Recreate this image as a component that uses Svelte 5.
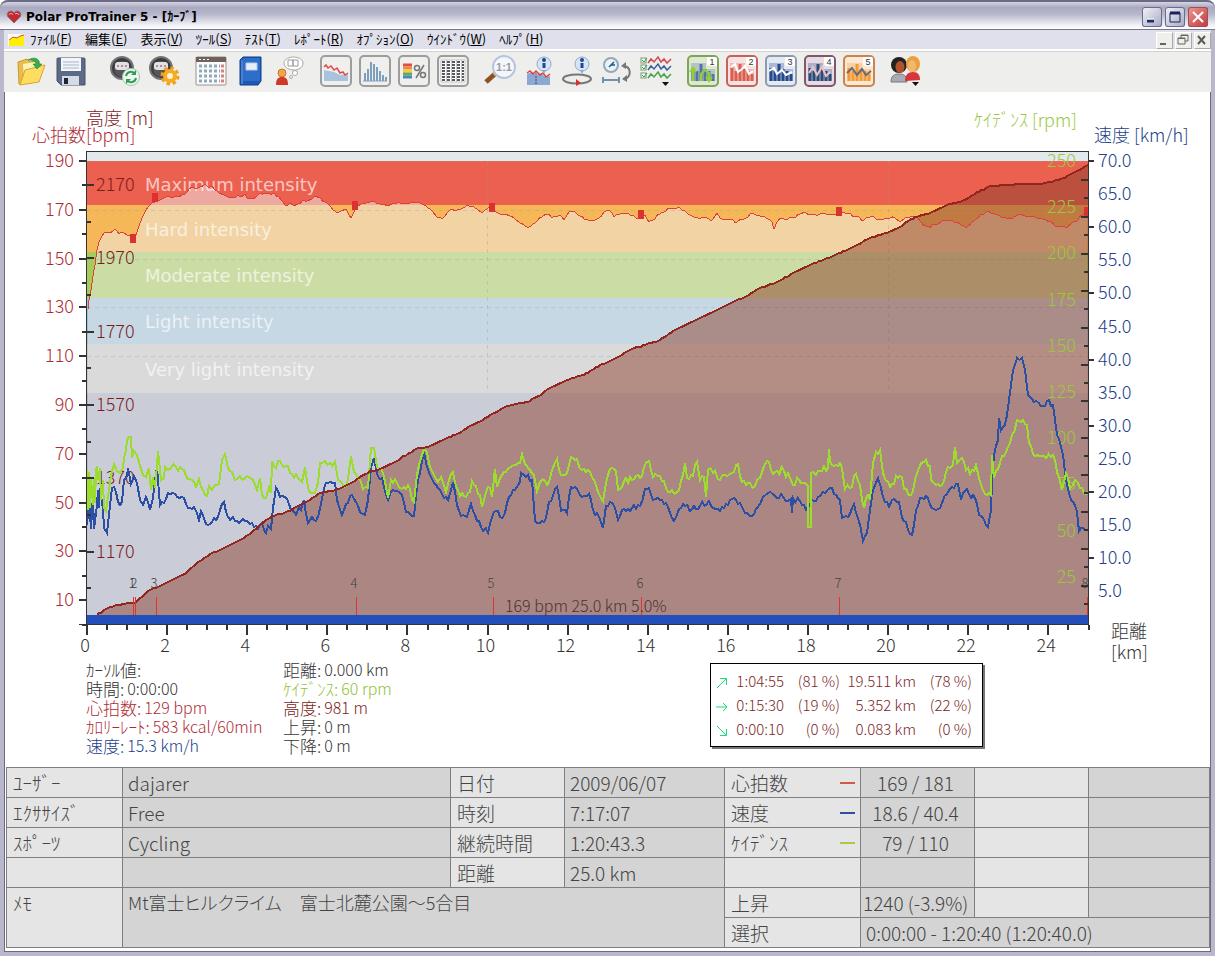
<script>
  const menus = [
    ['ﾌｧｲﾙ', 'F'], ['編集', 'E'], ['表示', 'V'], ['ﾂｰﾙ', 'S'], ['ﾃｽﾄ', 'T'],
    ['ﾚﾎﾟｰﾄ', 'R'], ['ｵﾌﾟｼｮﾝ', 'O'], ['ｳｲﾝﾄﾞｳ', 'W'], ['ﾍﾙﾌﾟ', 'H']
  ];

  const groups = [
    ['open', 'save'],
    ['connect', 'settings'],
    ['calendar', 'diary', 'coach'],
    ['curve', 'bars', 'zones', 'list'],
    ['zoom', 'info', 'lap', 'axis', 'select'],
    ['p1', 'p2', 'p3', 'p4', 'p5'],
    ['people']
  ];

  const titles = {
    open: 'Open', save: 'Save', connect: 'Connect', settings: 'Settings', calendar: 'Calendar',
    diary: 'Diary', coach: 'Coach', curve: 'Curve', bars: 'Distribution', zones: 'Zones', list: 'List',
    zoom: 'Zoom', info: 'Info', lap: 'Lap', axis: 'Axis', select: 'Select curves',
    p1: 'View 1', p2: 'View 2', p3: 'View 3', p4: 'View 4', p5: 'View 5', people: 'Users'
  };

  const presets = {
    p1: { frame: '#7fa657', fill: '#dde8d0', bar: '#5673a0', line: '#8fd42c', d: 'M6 26V14M3 17l3-4 3 4M14 26V19l4-4 4 3v7M19 22l3 4 3-4' },
    p2: { frame: '#c8605c', fill: '#f6e2e0', bar: '#d9604f', line: '#ffffff', d: 'M5 12l4-3 3 8 4-3 3-3 4 8 4-3' },
    p3: { frame: '#8d9bb0', fill: '#e4eaf2', bar: '#27488f', line: '#ffffff', d: 'M4 16l5-3 3 6 5-4 4 5 6-3' },
    p4: { frame: '#84566a', fill: '#e6dbe2', bar: '#2b4a77', line: '#e9c3cc', d: 'M5 18l4-6 4 8 5-8 4 9 4-4' },
    p5: { frame: '#cc834c', fill: '#fbe9d4', bar: '#f29a35', line: '#6b6a78', d: 'M4 18l5-5 5 7 5-6 4 6 5-4' }
  };

  // Flat coordinate lists on the plot's own scale: x, y, x, y ...
  const hr = [88,309,89,300,91,290,93,276,95,265,97,250,99,242,102,236,104,233,107,232,110,233,113,231,115,229,117,231,119,234,121,232,124,233,127,235,130,236,132,240,135,238,137,232,139,226,142,218,145,212,148,207,151,204,155,202,158,200,162,199,166,197,172,197,178,196,183,194,187,192,189,189,192,187,196,188,200,187,205,184,208,187,212,186,215,190,219,193,224,195,230,197,235,198,238,195,240,197,245,194,247,198,252,198,257,196,260,193,265,193,270,194,274,193,279,197,283,202,286,206,290,203,293,205,298,204,303,200,307,201,312,199,315,196,320,198,325,202,329,205,333,210,337,213,341,211,346,209,349,215,351,218,354,212,357,206,362,203,368,202,372,201,376,203,384,204,387,206,392,204,400,203,410,203,413,202,420,203,424,205,428,208,432,211,437,217,443,218,447,213,450,210,457,210,463,208,467,205,473,206,477,209,482,213,485,210,489,207,492,209,496,212,500,214,505,214,510,216,515,219,520,223,525,226,531,226,537,221,542,217,547,214,552,218,556,216,560,215,564,220,569,212,574,211,580,216,586,219,593,220,599,218,604,212,608,210,612,213,614,217,620,214,626,213,634,216,638,219,641,218,645,215,649,222,655,219,658,214,664,212,670,208,680,208,686,212,694,217,700,219,705,217,711,221,717,213,720,218,726,220,730,219,737,222,742,219,748,217,752,213,758,215,764,216,768,219,772,222,774,229,777,222,782,218,786,219,790,217,795,218,800,214,805,212,810,214,816,215,822,213,830,214,836,215,843,212,850,213,855,217,858,216,862,221,866,218,872,216,878,219,884,219,890,218,895,218,900,222,905,218,912,216,918,218,921,222,926,226,930,228,933,224,937,225,942,221,950,220,956,222,961,225,967,227,972,222,976,219,980,215,986,212,993,213,1000,216,1007,219,1012,219,1018,215,1027,216,1037,218,1045,219,1050,221,1055,226,1061,226,1067,228,1072,223,1078,220,1081,215,1087,212];
  const altitude = [97,615,103,611,108,608,118,605,127,603,134,603,138,600,150,590,160,586,180,576,187,572,198,562,210,554,220,550,240,540,250,534,264,522,272,516,290,511,300,505,310,500,320,493,335,490,355,481,370,471,378,470,395,462,416,449,428,447,445,439,457,434,468,427,483,420,490,415,505,407,515,404,530,401,543,393,550,388,565,381,570,379,588,373,600,365,612,360,630,350,645,345,658,341,675,330,700,318,715,311,735,301,745,297,760,288,777,282,793,273,810,265,825,259,835,255,855,246,870,238,887,233,900,227,915,217,930,213,945,206,960,202,975,194,990,186,1005,185,1020,184,1040,184,1052,182,1065,178,1075,172,1088,165];
  const cadence = [87,470,88,510,89,472,90,508,91,478,93,505,94,478,95,503,96,470,97,466,98,480,100,468,101,500,103,480,104,508,106,511,109,490,111,475,114,464,117,471,120,473,123,468,124,458,126,450,127,440,129,437,131,437,132,458,134,451,137,455,140,466,143,475,146,477,149,468,151,490,153,477,155,488,157,466,158,451,160,470,161,480,164,478,165,467,168,470,171,468,176,467,182,469,186,476,192,480,196,487,199,479,203,490,207,496,209,486,212,490,215,485,219,484,222,460,225,454,228,468,232,472,235,480,240,476,245,478,250,478,254,482,257,490,260,478,262,495,266,498,269,487,271,493,272,461,276,468,280,461,284,467,288,466,292,474,298,478,302,482,305,467,309,491,315,493,318,483,320,463,325,461,330,463,335,462,338,480,344,487,348,479,351,456,354,472,358,478,363,489,368,488,371,448,374,448,377,467,382,470,386,487,388,498,391,480,395,479,399,487,404,487,408,485,412,500,414,502,417,475,421,458,424,449,427,452,430,467,434,475,438,482,441,477,446,492,449,480,453,472,457,488,460,496,466,497,470,492,472,481,476,486,480,495,482,507,486,492,490,488,492,497,495,469,497,487,500,478,506,472,511,467,516,465,520,463,522,454,525,464,530,470,534,475,537,491,540,482,545,481,549,482,552,470,557,459,561,475,567,473,571,457,577,459,582,470,588,470,592,477,595,482,598,492,603,501,606,483,610,469,616,471,618,490,624,481,632,480,640,478,644,467,649,461,653,477,660,476,666,488,672,490,677,492,681,481,685,463,687,478,693,476,697,462,700,480,704,477,706,497,708,470,713,473,720,480,725,475,732,473,738,464,742,482,746,485,750,483,755,486,760,478,764,466,767,461,771,470,777,471,784,471,790,478,793,485,797,478,803,483,808,486,808,527,811,527,811,473,816,475,820,471,828,468,829,449,830,462,838,466,842,468,845,489,850,488,856,474,860,485,864,508,868,495,870,500,873,463,876,452,880,450,883,473,888,482,892,484,896,476,902,477,904,489,911,495,915,480,919,468,926,460,930,466,931,480,936,485,942,485,948,467,953,465,955,447,957,463,962,458,966,470,972,470,976,465,979,478,983,490,989,493,991,495,992,455,994,478,1000,463,1006,452,1012,435,1017,420,1021,422,1027,425,1029,443,1033,454,1042,456,1053,455,1057,472,1062,490,1066,473,1070,488,1075,480,1080,488,1084,493,1088,492];
  const speed = [87,525,89,500,91,529,93,495,94,529,97,505,98,490,99,508,100,488,103,510,104,528,107,533,109,515,112,488,116,492,118,502,122,502,124,480,127,476,128,468,131,484,134,476,137,483,140,500,143,505,146,497,150,510,153,498,155,480,157,467,158,480,160,505,164,503,168,493,175,494,184,498,188,508,194,507,199,520,201,511,206,524,212,522,218,517,222,504,224,502,228,517,235,521,243,519,252,523,258,529,262,523,266,533,268,526,271,529,273,508,276,488,280,497,287,499,291,510,296,515,299,507,301,510,304,500,308,523,312,517,316,521,321,504,324,488,328,483,335,483,337,500,342,515,350,496,356,502,360,512,365,515,368,500,371,468,374,458,377,474,382,478,386,495,388,500,393,490,402,495,406,512,414,516,418,480,424,452,428,470,434,483,440,490,448,500,453,482,457,505,461,516,467,517,471,504,475,515,481,527,488,533,492,517,496,511,500,517,505,513,509,497,515,490,520,482,521,473,524,475,532,480,535,521,542,521,546,518,549,502,557,487,561,511,567,513,571,487,577,489,582,497,589,494,593,510,599,517,603,528,606,506,610,502,615,508,618,520,624,509,632,508,640,506,645,489,649,488,653,500,660,500,668,507,674,521,679,509,685,506,692,509,700,506,709,501,720,511,726,504,732,499,740,503,745,513,752,516,758,507,763,497,768,493,775,496,781,494,788,501,791,499,792,513,793,498,800,501,806,510,812,500,818,497,825,493,830,488,836,495,840,500,842,518,850,514,854,504,858,518,863,541,867,533,870,510,873,490,878,478,883,497,889,507,892,500,899,502,902,518,912,535,916,510,920,498,926,496,930,505,936,510,942,503,947,494,954,488,958,484,961,500,965,491,975,498,979,515,984,520,988,527,991,510,992,480,994,455,998,440,999,418,1001,430,1005,425,1009,400,1013,370,1017,358,1022,358,1025,370,1028,395,1034,402,1041,406,1047,401,1053,405,1057,435,1063,455,1066,480,1071,500,1077,512,1079,531,1083,528,1088,530];

  function trace(flat, amount) {
    let seed = 7;
    const rnd = () => ((seed = (seed * 16807) % 2147483647) / 2147483647 - 0.5) * 2;
    const out = [];
    for (let i = 0; i < flat.length; i += 2) {
      out.push(flat[i] + ',' + flat[i + 1]);
      if (i + 3 < flat.length) {
        const n = Math.floor((flat[i + 2] - flat[i]) / 2);
        for (let k = 1; k < n; k++) {
          const t = k / n;
          const x = flat[i] + (flat[i + 2] - flat[i]) * t;
          const y = flat[i + 1] + (flat[i + 3] - flat[i + 1]) * t + rnd() * amount;
          out.push(x.toFixed(1) + ',' + Math.round(y));
        }
      }
    }
    return out.join(' ');
  }

  const hrLine = trace(hr, 1);
  const altLine = trace(altitude, 0.4);
  const cadLine = trace(cadence, 4);
  const spdLine = trace(speed, 3);

  const bands = [
    [151, 10, '#e3e8ed'], [161, 44, '#eb604f'], [205, 47, '#f5b757'], [252, 46, '#a7cb5b'],
    [298, 46, '#9dc1d7'], [344, 49, '#c5c5c5'], [393, 232, '#a5abc1']
  ];
  const zoneNames = [
    ['Maximum intensity', 191], ['Hard intensity', 236], ['Moderate intensity', 282],
    ['Light intensity', 328], ['Very light intensity', 376]
  ];
  const range = (n) => Array.from({ length: n }, (_, i) => i);
  const bpmTicks = range(10).map((i) => [190 - 20 * i, 161 + 48.8 * i]);
  const altTicks = range(6).map((i) => [2170 - 200 * i, 185 + 73.3 * i]);
  const cadTicks = range(10).map((i) => [250 - 25 * i, 161 + 46.2 * i]);
  const spdTicks = range(14).map((i) => [(70 - 5 * i).toFixed(1), 161 + 33.1 * i]);
  const laps = [[1, 133, 132], [2, 135, 134], [3, 156, 154], [4, 356, 354], [5, 493, 491], [6, 641, 640], [7, 839, 838], [8, 1087, 1085]];
  const marks = [[133, 239], [155, 198], [355, 206], [492, 208], [641, 215], [839, 212], [1087, 212]];

  const left = [
    ['ｶｰｿﾙ値:', '', 'ink'], ['時間:', '0:00:00', 'ink'], ['心拍数:', '129 bpm', 'hr'],
    ['ｶﾛﾘｰﾚｰﾄ:', '583 kcal/60min', 'hr'], ['速度:', '15.3 km/h', 'spd']
  ];
  const right = [
    ['距離:', '0.000 km', 'ink'], ['ｹｲﾃﾞﾝｽ:', '60 rpm', 'cad'], ['高度:', '981 m', 'alt'],
    ['上昇:', '0 m', 'ink'], ['下降:', '0 m', 'ink']
  ];
  const slopes = [
    ['M1 11 L10 2 M4 1.500h6.500v6.500', '1:04:55', '(81 %)', '19.511 km', '(78 %)'],
    ['M0 6h11 M7 2l4 4-4 4', '0:15:30', '(19 %)', '5.352 km', '(22 %)'],
    ['M1 1l9 9 M4 10.500h6.500V4', '0:00:10', '(0 %)', '0.083 km', '(0 %)']
  ];
</script>

<div class="window">
  <header class="titlebar">
    <svg class="heart" viewBox="0 0 16 16" aria-hidden="true">
      <path d="M8 14L2 8C0 5 2 2 5 2c1.500 0 2.500 1 3 2 .5-1 1.500-2 3-2 3 0 5 3 3 6z" fill="#c22a35" stroke="#8d7478" />
      <path d="M3 6c1-2 3-2 4 0M9 5c1-1 3-1 4 1" fill="none" stroke="#f3b8bc" />
    </svg>
    <h1>Polar ProTrainer 5 - [ｶｰﾌﾞ]</h1>
    <div class="winbtns">
      <button aria-label="Minimize"><svg viewBox="0 0 20 20"><path d="M5 14h7" stroke="#1d2f6b" stroke-width="3" /><path d="M5 12h7" stroke="#fff" /></svg></button>
      <button aria-label="Maximize"><svg viewBox="0 0 20 20"><path d="M5 6h10v9H5z" fill="none" stroke="#1d2358" /><path d="M5 6h10" stroke="#1d2358" stroke-width="3" /></svg></button>
      <button class="close" aria-label="Close"><svg viewBox="0 0 20 20"><path d="M5 5l10 10M15 5L5 15" stroke="#fff" stroke-width="2" /></svg></button>
    </div>
  </header>

  <nav class="menubar">
    <svg class="doc" viewBox="0 0 16 16" aria-hidden="true"><path d="M0 2h16v12H0z" fill="#fff" /><path d="M1 8l4-3 4 1 3-2 4-1v11H1z" fill="#ffef00" /><path d="M1 8l4-3 4 1 3-2 4-1" fill="none" stroke="#d8521e" /></svg>
    {#each menus as [name, key]}
      <button>{name}(<u>{key}</u>)</button>
    {/each}
    <div class="mdi">
      <button aria-label="Minimize document"><svg viewBox="0 0 16 16"><path d="M4 12h6" stroke="#66665f" stroke-width="2" /></svg></button>
      <button aria-label="Restore document"><svg viewBox="0 0 16 16"><path d="M6 7V3h7v6h-3M3 6h7v6H3z" fill="none" stroke="#66665f" /><path d="M3 6.500h7M6 3.500h7" stroke="#66665f" /></svg></button>
      <button aria-label="Close document"><svg viewBox="0 0 16 16"><path d="M4 4l7 8M11 4l-7 8" stroke="#5b5b56" stroke-width="2" /></svg></button>
    </div>
  </nav>

  <div class="toolbar">
    {#each groups as group}
      <div class="group">
        {#each group as id}
          <button aria-label={titles[id]}>
            <svg viewBox="0 0 32 32" fill="none">
              {#if id === 'open'}
                <path d="M2 7l9-3 3 3 9-1v5H9L5 29H3z" fill="#e9bd4a" stroke="#c99a2a" />
                <path d="M7 9l12-2 3 3v12L8 28z" fill="#fdf3b8" />
                <path d="M9 15l20-5-6 17L4 30z" fill="#ffdc62" stroke="#d9a52f" />
                <path d="M12 5c7-4 12-1 11 4h3l-5 5-4-5h3c0-3-4-4-8-4z" fill="#35b04a" stroke="#1e8234" stroke-width=".6" />
              {:else if id === 'save'}
                <path d="M2 4q0-1 1-1h26q1 0 1 1v26H6l-4-4z" fill="#5b6a86" stroke="#46536c" />
                <path d="M6 3h20v13H6z" fill="#f2f5fa" /><path d="M8 7h16M8 10h16M8 13h16" stroke="#aab4c6" />
                <path d="M7 21h17v9H7z" fill="#d5dbe6" /><path d="M9 23h4v6H9z" fill="#1d2531" />
              {:else if id === 'connect' || id === 'settings'}
                <circle cx="13" cy="13" r="11" fill="#3b3b3f" stroke="#737378" stroke-width="2" />
                <ellipse cx="13" cy="14" rx="8" ry="8" fill="#55555a" />
                <rect x="6" y="7" width="14" height="8" rx="3" fill="#e4e0e2" /><path d="M8 11h10" stroke="#a3939a" stroke-width="2" stroke-dasharray="2 2" />
                {#if id === 'connect'}
                  <circle cx="22" cy="22" r="8.500" fill="#eef6f0" stroke="#a9c4b2" />
                  <path d="M17 21a5 5 0 0 1 9-2M27 23a5 5 0 0 1-9 2" stroke="#2e9e54" stroke-width="2" /><path d="M27 15v5h-5zM17 29v-5h5z" fill="#2e9e54" />
                {:else}
                  <circle cx="22" cy="21" r="7" stroke="#f0a018" stroke-width="5" stroke-dasharray="3 2.500" />
                  <circle cx="22" cy="21" r="5" stroke="#f5ac22" stroke-width="4" fill="#fff3dc" />
                {/if}
              {:else if id === 'calendar'}
                <rect x="1" y="2" width="30" height="28" rx="1" fill="#fbfbfb" stroke="#9c8f87" /><path d="M1 2h30v5H1z" fill="#6f625c" />
                <path d="M4 4.500h12" stroke="#fff" stroke-dasharray="2 2" />
                {#each [11, 16, 21, 26] as y}<path d={`M4 ${y}h21`} stroke="#8fa9bb" stroke-width="3" stroke-dasharray="3 2" /><path d={`M26 ${y}h3`} stroke="#d88080" stroke-width="3" />{/each}
              {:else if id === 'diary'}
                <path d="M6 5l3-3h18v24l-3 4H6z" fill="#1c58b4" stroke="#123f86" /><path d="M9 3h17v23H9z" fill="#2d6ecb" /><path d="M8 5v24" stroke="#7ca8e4" />
                <path d="M12 8h11v7H12z" fill="#e7eef8" stroke="#b9cbe5" />
              {:else if id === 'coach'}
                <circle cx="9" cy="18" r="4" fill="#f0a548" stroke="#c67c2c" /><path d="M3 30c0-6 2-8 6-8s6 2 6 8z" fill="#d1382c" />
                <path d="M11 8c0-4 6-6 9-6s10 1 10 6-5 7-9 7-10-2-10-7z" fill="#fff" stroke="#a8a8a8" /><path d="M15 5h5v6h-5zM20 5h5v6h-5z" stroke="#999" />
                <circle cx="22" cy="18" r="2.500" fill="#fff" stroke="#aaa" /><circle cx="18" cy="22" r="1.500" fill="#fff" stroke="#aaa" />
              {:else if ['curve', 'bars', 'zones', 'list'].includes(id)}
                <rect x="1" y="1" width="30" height="30" rx="4" fill="#efefed" stroke="#9d9d9d" stroke-width="2" />
                {#if id === 'curve'}
                  <path d="M4 15l5 1 5 1 6 3 8-1v7H4z" fill="#a9c3dc" /><path d="M4 12l2-2 2 3 3-2 3 4 3-2 3 5 3-1 2 3 3-2" stroke="#e04c4c" stroke-width="1.500" />
                {:else if id === 'bars'}
                  <path d="M4 26h24" stroke="#8aa4bb" />
                  {#each [[6, 18], [9, 14], [12, 7], [15, 9], [18, 12], [21, 16], [24, 20], [27, 22]] as [x, y]}<path d={`M${x} 26V${y}`} stroke="#7d9fbe" stroke-width="2" />{/each}
                {:else if id === 'zones'}
                  {#each ['#e14c43', '#ef8b3b', '#f3cd49', '#62ab4f', '#4a87bb'] as c, i}<path d={`M5 ${10 + i * 3}h9`} stroke={c} stroke-width="3" />{/each}
                  <path d="M18 23l8-13" stroke="#777" stroke-width="1.500" /><circle cx="19" cy="13" r="2.500" stroke="#777" stroke-width="1.500" /><circle cx="25" cy="20" r="2.500" stroke="#777" stroke-width="1.500" />
                {:else}
                  <path d="M4 5h24v22H4z" fill="#fff" stroke="#999" stroke-width=".5" />
                  {#each range(7) as i}<path d={`M5 ${7 + i * 3}h22`} stroke="#222" stroke-width="1.500" stroke-dasharray="3 2" />{/each}
                  <path d="M9.500 5v22M14.500 5v22M19.500 5v22M24.500 5v22" stroke="#9ab" stroke-width=".6" />
                {/if}
              {:else if id === 'zoom'}
                <path d="M2 27l10-9" stroke="#8d5327" stroke-width="5" /><path d="M10 20l3-3" stroke="#dba45c" stroke-width="4" />
                <circle cx="20" cy="12" r="11" fill="#f3f7fc" stroke="#b7c4dc" stroke-width="2" /><text x="20" y="16" class="ratio">1:1</text>
              {:else if id === 'info'}
                <path d="M4 19l5-2 4 3 5-2 4 4 5-1v9H4z" fill="#8ba9d2" /><path d="M4 18l3-2 3 3 3-3 4 4 3-2 3 4 4-3" stroke="#e04040" stroke-width="1.500" /><path d="M13 29V17" stroke="#446" stroke-dasharray="2 1" />
                <circle cx="21" cy="9" r="7" fill="#d5e5f6" stroke="#8cabd0" /><path d="M19 15h4l-2 4z" fill="#8cabd0" /><path d="M21 8v5" stroke="#24478c" stroke-width="3" /><circle cx="21" cy="5" r="2" fill="#24478c" />
              {:else if id === 'lap'}
                <ellipse cx="15" cy="24" rx="14" ry="4.500" stroke="#777" stroke-width="2" /><path d="M14 24l5 4-5 3z" fill="#db3027" />
                <circle cx="20" cy="9" r="7" fill="#d5e5f6" stroke="#8cabd0" /><path d="M18 15h4l-2 4z" fill="#8cabd0" /><path d="M20 8v5" stroke="#24478c" stroke-width="3" /><circle cx="20" cy="5" r="2" fill="#24478c" />
              {:else if id === 'axis'}
                <circle cx="10" cy="10" r="7" fill="#e9f2f8" stroke="#92a9b8" stroke-width="2" /><path d="M8 12l5-5M10 10h4" stroke="#1b5a80" stroke-width="1.500" />
                <path d="M2 25h16M2 22v6M18 22v6" stroke="#7292ab" stroke-width="2" /><path d="M22 11c8 0 9 10 2 13" stroke="#777" stroke-width="2" /><path d="M25 7v7l-5-3zM26 27l-5-3 5-4z" fill="#777" />
              {:else if id === 'select'}
                {#each [['#d54b4b', 6], ['#3e629e', 13], ['#46a545', 21]] as [c, y]}
                  <rect x="1" y={y - 3} width="5" height="5" stroke="#6ca06c" fill="#fff" /><path d={`M2 ${y - 1}l2 2 3-4`} stroke="#3c8d48" />
                  <path d={`M8 ${y + 2}l3-4 3 3 4-5 3 5 3-3 3 4 4-4`} stroke={c} stroke-width="1.500" />
                {/each}
                <path d="M22 27h7l-3.500 4z" fill="#111" />
              {:else if presets[id]}
                <rect x="1" y="1" width="30" height="30" rx="4" fill={presets[id].fill} stroke={presets[id].frame} stroke-width="2" />
                <path d="M4 8h15v6h9v12H4z" fill={presets[id].bar} opacity=".3" />
                {#each [[5, 13], [9, 16], [13, 9], [17, 14], [21, 16], [25, 19]] as [x, y]}<path d={`M${x + 1} 26V${y}`} stroke={presets[id].bar} stroke-width="3" />{/each}
                <path d={presets[id].d} stroke={presets[id].line} stroke-width="2" />
                <path d="M20 2h8q2 0 2 2v7h-7q-3 0-3-3z" fill="#fff" /><text x="25" y="10" class="num">{id[1]}</text>
              {:else}
                <path d="M1 27c0-6 3-8 8-8s8 2 8 8z" fill="#a8abb5" stroke="#777" /><path d="M15 26c0-6 3-9 8-9s7 3 7 8z" fill="#d7353b" />
                <ellipse cx="9" cy="10" rx="8" ry="8" fill="#222" /><ellipse cx="10" cy="12" rx="4.500" ry="6" fill="#b2522a" />
                <ellipse cx="23" cy="9" rx="7" ry="8" fill="#e9a23a" /><ellipse cx="22" cy="11" rx="4" ry="6" fill="#f3b772" />
                <path d="M22 27h7l-3.500 4z" fill="#111" />
              {/if}
            </svg>
          </button>
        {/each}
      </div>
    {/each}
  </div>

  <main>
    <svg class="chart" viewBox="4 92 1207 568" role="img" aria-label="心拍数 高度 ケイデンス 速度">
      <defs><clipPath id="plot"><rect x="87" y="151" width="1001" height="465" /></clipPath></defs>
      {#each bands as [y, h, c]}<rect x="87" {y} width="1001" height={h} fill={c} />{/each}
      <g clip-path="url(#plot)">
        <polygon points={`87,625 ${hrLine} 1088,625`} fill="#efefef" opacity=".5" />
        <g class="grid">
          {#each bpmTicks as [, y]}{#if y < 360}<path d={`M87 ${Math.round(y) + 0.5}H1088`} />{/if}{/each}
          <path d="M487.500 161V393M888.500 161V393" />
        </g>
        {#each zoneNames as [t, y]}<text class="zone" x="145" {y}>{t}</text>{/each}
        <polygon points={`${altLine} 1088,616 97,616`} fill="#8e3f2e" opacity=".5" />
      </g>
      <g class="alt">{#each altTicks as [v, y]}<text x="96" y={y + 6}>{v}</text>{/each}</g>
      <g class="cad end">{#each cadTicks as [v, y]}<text x="1076" y={y + 6}>{v}</text>{/each}</g>
      <g clip-path="url(#plot)" fill="none" shape-rendering="crispEdges">
        <polyline points={hrLine} stroke="#dd4038" />
        <polyline points={spdLine} stroke="#2c4fa6" stroke-width="2" />
        <polyline points={cadLine} stroke="#9bdc2e" stroke-width="2" />
        <polyline points={altLine} stroke="#92261f" stroke-width="2" />
      </g>
      {#each marks as [x, y]}<rect x={x - 3} y={y - 5} width={x > 1080 ? 4 : 6} height="9" fill="#dc3131" />{/each}
      <rect x="87" y="615" width="1001" height="9" fill="#224fba" />
      {#each laps as [n, x, tx]}
        <path d={`M${x + 0.5} 597V615`} stroke="#e0352f" />
        <text class="lapno" x={tx} y="588">{n}</text>
      {/each}
      <text class="sum" x="505" y="612">169 bpm 25.0 km 5.0%</text>

      <g class="ticks" shape-rendering="crispEdges">
        <path class="frame" d="M86.500 151V625M86 151.500H1088M1088.500 151V625M79 624.500H1089" />
        {#each bpmTicks as [, y]}<path d={`M79 ${y}H87M82 ${y + 24.4}H87`} />{/each}
        {#each altTicks as [, y]}<path d={`M86 ${y}H94M86 ${y + 36.700}H91`} />{/each}
        {#each range(12) as i}<path d={`M1081 ${180 + i * 36.900}H1088M1084 ${198 + i * 36.900}H1088`} />{/each}
        {#each range(7) as i}<path d={`M1088 ${161 + i * 66.200}H1094`} />{/each}
        {#each range(51) as i}<path d={`M${87 + i * 20.030} 625v${i % 4 === 0 ? 10 : 5}`} />{/each}
      </g>

      <g class="hr end">{#each bpmTicks as [v, y]}<text x="74" y={y + 6}>{v}</text>{/each}</g>
      <g class="spd">{#each spdTicks as [v, y]}<text x="1098" y={y + 6}>{v}</text>{/each}</g>
      <g class="ink mid">{#each range(13) as i}<text x={85 + i * 80.100} y="652">{i * 2}</text>{/each}</g>
      <g class="axisname">
        <text class="alt" x="86" y="125">高度 [m]</text>
        <text class="hr" x="32" y="142">心拍数[bpm]</text>
        <text class="cad" x="974" y="127">ｹｲﾃﾞﾝｽ [rpm]</text>
        <text class="spd" x="1094" y="142">速度 [km/h]</text>
        <text class="ink" x="1111" y="638">距離</text>
        <text class="ink" x="1111" y="659">[km]</text>
      </g>
    </svg>

    <section class="readout">
      {#each [left, right] as col}
        <dl>
          {#each col as [k, v, c]}<div class={c}><dt>{k}</dt><dd>{v}</dd></div>{/each}
        </dl>
      {/each}
      <table class="slopes">
        <tbody>
          {#each slopes as [d, ...cells]}
            <tr>
              <td><svg viewBox="0 0 12 12" aria-hidden="true"><path {d} fill="none" stroke="#16e07c" /></svg></td>
              {#each cells as c}<td>{c}</td>{/each}
            </tr>
          {/each}
        </tbody>
      </table>
    </section>

    <table class="info">
      <colgroup><col class="w116" /><col /><col class="w114" /><col class="w160" /><col class="w136" /><col class="w114" /><col class="w114" /><col class="w121" /></colgroup>
      <tbody>
        <tr><th>ﾕｰｻﾞｰ</th><td>dajarer</td><th>日付</th><td>2009/06/07</td><th><span class="key">心拍数<i class="khr"></i></span></th><td class="c">169 / 181</td><th></th><td></td></tr>
        <tr><th>ｴｸｻｻｲｽﾞ</th><td>Free</td><th>時刻</th><td>7:17:07</td><th><span class="key">速度<i class="kspd"></i></span></th><td class="c">18.6 / 40.4</td><th></th><td></td></tr>
        <tr><th>ｽﾎﾟｰﾂ</th><td>Cycling</td><th>継続時間</th><td>1:20:43.3</td><th><span class="key">ｹｲﾃﾞﾝｽ<i class="kcad"></i></span></th><td class="c">79 / 110</td><th></th><td></td></tr>
        <tr><th></th><td></td><th>距離</th><td>25.0 km</td><th></th><td></td><th></th><td></td></tr>
        <tr><th rowspan="2">ﾒﾓ</th><td class="memo" rowspan="2" colspan="3">Mt富士ヒルクライム　富士北麓公園～5合目</td><th>上昇</th><td class="c">1240 (-3.9%)</td><th></th><td></td></tr>
        <tr><th>選択</th><td colspan="3">0:00:00 - 1:20:40 (1:20:40.0)</td></tr>
      </tbody>
    </table>
  </main>
</div>

<style>
  :global(body) { margin: 0; background: #fff; }
  .window {
    min-height: 100vh; box-sizing: border-box; display: flex; flex-direction: column;
    border: 4px solid #b9b7cb; border-top: 0; border-radius: 8px 8px 0 0;
    box-shadow: inset 1px 0 #6b6a82, inset -1px 0 #6b6a82, inset 0 -1px #6b6a82;
    background: #fff; color: #444;
    font-family: "Noto Sans CJK JP", "Liberation Sans", sans-serif; font-weight: 300;
  }
  button { font: inherit; color: inherit; border: 0; padding: 0; background: none; display: block; }
  .titlebar {
    display: flex; align-items: center; height: 30px; margin: 0 -4px; padding: 3px 7px 0 6px; box-sizing: border-box;
    border-top: 2px solid #6b6a86; border-bottom: 1px solid #77768e; border-radius: 8px 8px 0 0;
    background: linear-gradient(#d6d6e2, #a9a9c2 20%, #b7b7cb 45%, #f0f0f6 85%, #fff);
  }
  .heart { width: 16px; height: 16px; }
  h1 { margin: 0 auto 0 4px; font: 700 12px/20px "DejaVu Sans", "Noto Sans CJK JP", sans-serif; color: #000; white-space: pre; }
  .winbtns { display: flex; gap: 3px; }
  .winbtns button { width: 20px; height: 20px; border-radius: 3px; background: linear-gradient(135deg, #f4f4fa, #a7a7c4); box-shadow: inset 0 0 0 1px #6b6b8c; }
  .winbtns .close { background: linear-gradient(135deg, #ee9a90, #c2363c); box-shadow: inset 0 0 0 1px #9b5058; }
  .winbtns svg, .mdi svg { display: block; width: 100%; height: 100%; }
  .menubar { display: flex; align-items: center; gap: 13px; height: 19px; padding: 0 1px 0 4px; background: #dfe0eb; border-bottom: 2px solid #fff; color: #000; font-size: 13px; line-height: 17px; font-weight: 400; }
  .menubar > button { padding-bottom: 2px; }
  .doc { width: 16px; height: 16px; margin-right: -7px; }
  .mdi { display: flex; gap: 3px; margin-left: auto; }
  .mdi button { width: 16px; height: 16px; background: #efefec; box-shadow: 1px 1px #a8a8a8, inset 1px 1px #fff; }
  .toolbar { display: flex; gap: 15px; height: 41px; box-sizing: border-box; padding: 3px 12px 0; background: #eeeeec; border-top: 1px solid #d2d2ce; }
  .group { display: flex; gap: 7px; }
  .group:first-child { margin-right: 7px; }
  .toolbar button { width: 32px; height: 32px; }
  .toolbar svg { display: block; width: 32px; height: 32px; }
  .ratio { font: 700 11px "Liberation Sans", sans-serif; fill: #9a9aa2; text-anchor: middle; }
  .num { font: 9px "Liberation Sans", sans-serif; fill: #333; text-anchor: middle; }

  main { flex: 1; display: flex; flex-direction: column; padding-bottom: 4px; }
  .chart { display: block; width: 100%; height: auto; overflow: visible; font-size: 18px; }
  .grid path { fill: none; stroke: #9a9a9a; stroke-dasharray: 4 4; opacity: .35; }
  .zone { font: 18px "DejaVu Sans", sans-serif; fill: #fff; opacity: .65; }
  .ticks path { stroke: #333; stroke-width: 2; fill: none; }
  .ticks .frame { stroke-width: 1; }
  .lapno { font-size: 13px; fill: #444; text-anchor: middle; }
  .sum { font-size: 16px; fill: #4a3230; }
  .axisname { font-size: 18px; }
  .end { text-anchor: end; }
  .mid { text-anchor: middle; }
  .hr { color: #b02a36; fill: #b02a36; }
  .alt { color: #7c1c1c; fill: #7c1c1c; }
  .cad { color: #8fc232; fill: #9ac83c; }
  .spd { color: #234088; fill: #234088; }
  .ink { color: #333; fill: #333; }

  .readout { display: grid; grid-template-columns: 197px 427px auto; justify-content: start; align-items: start; padding: 0 0 6px 82px; }
  dl { margin: 0; font-size: 17px; }
  dl div { display: flex; gap: 3px; height: 19px; line-height: 19px; white-space: nowrap; }
  dt, dd { margin: 0; }
  dd { font-size: 16px; }
  .slopes { border: 1px solid #000; box-shadow: 2px 2px #777; border-spacing: 0; margin-top: 3px; padding: 5px 10px 5px 5px; background: #fff; color: #7b1e1e; font-size: 15px; line-height: 24px; }
  .slopes td { padding: 0; text-align: right; width: 56px; white-space: nowrap; }
  .slopes td:first-child { width: 18px; text-align: left; }
  .slopes td:nth-child(2) { width: 50px; }
  .slopes td:nth-child(4) { width: 76px; }
  .slopes svg { width: 12px; height: 12px; vertical-align: middle; }

  .info { width: calc(100% - 3px); margin: auto 1px 0 2px; border-collapse: collapse; table-layout: fixed; font-size: 19px; }
  .info th, .info td { border: 1px solid #7f7f7f; padding: 0 5px; height: 29px; box-sizing: border-box; text-align: left; vertical-align: top; font-weight: 300; white-space: nowrap; line-height: 29px; }
  .info th { background: #e5e5e5; padding: 0 5px 0 6px; }
  .info td { background: #d4d4d4; }
  .info td.c { padding: 0 6px 0 2px; text-align: center; }
  .info .memo { font-size: 18px; font-feature-settings: "palt"; }
  .w116 { width: 116px; } .w114 { width: 114px; } .w160 { width: 160px; } .w136 { width: 136px; } .w121 { width: 121px; }
  .key { display: flex; justify-content: space-between; align-items: center; }
  .key i { width: 15px; height: 2px; }
  .khr { background: #cf5a4a; }
  .kspd { background: #2f4fa0; }
  .kcad { background: #a4cb4a; }
</style>
